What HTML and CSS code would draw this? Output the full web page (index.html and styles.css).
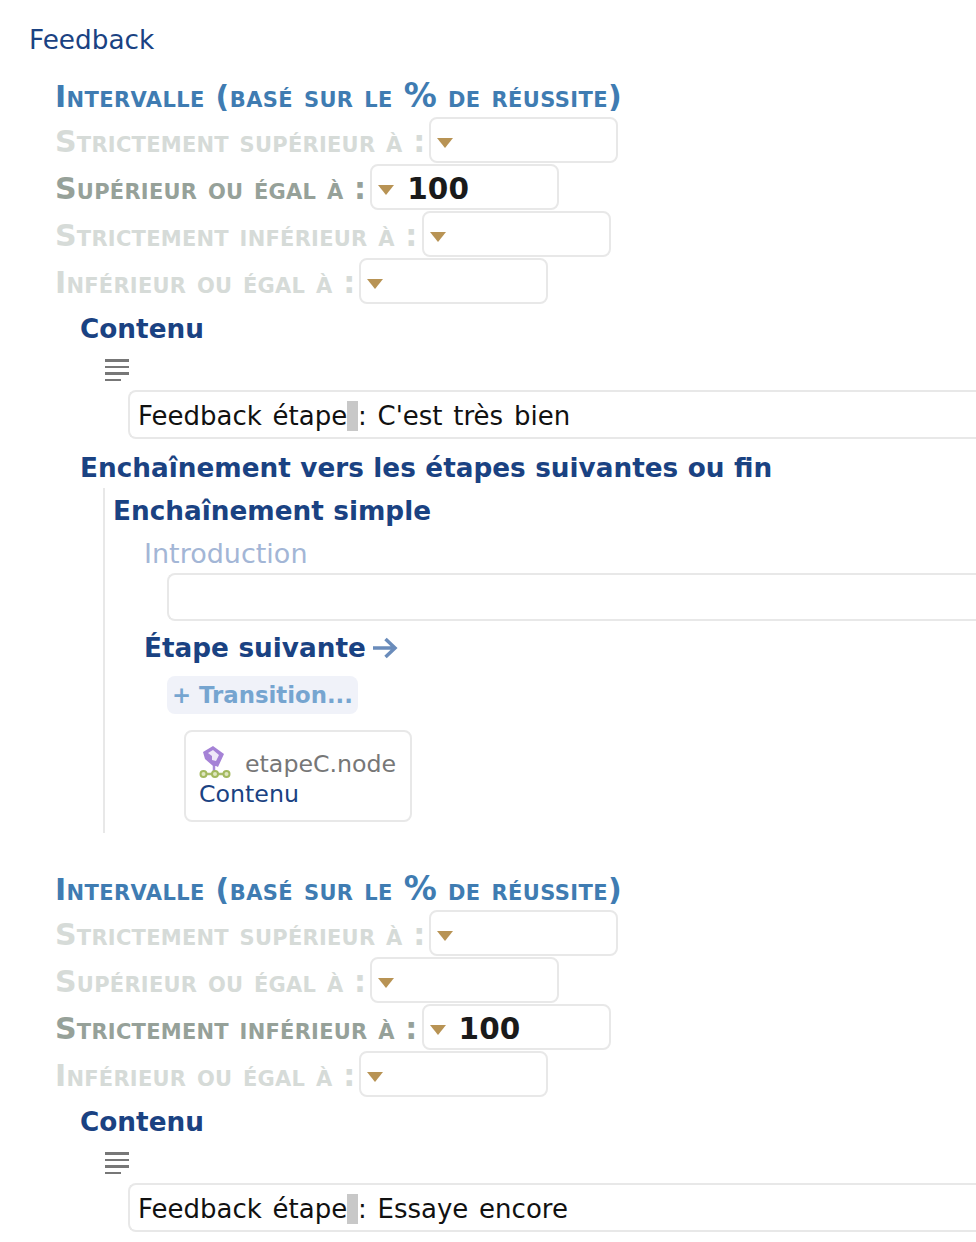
FILE: index.html
```html
<!DOCTYPE html>
<html lang="fr">
<head>
<meta charset="utf-8">
<title>Feedback</title>
<link rel="stylesheet" href="styles.css">
</head>
<body>
<div class="page">
  <div class="title">Feedback</div>
  <section class="range">
    <h2 class="range-title">Intervalle (basé sur le <span class="pct">%</span> de réussite)</h2>
    <div class="row off"><span class="lab">Strictement supérieur à :</span><span class="field"><i class="tri"></i></span></div>
    <div class="row on"><span class="lab">Supérieur ou égal à :</span><span class="field"><i class="tri"></i><b class="val">100</b></span></div>
    <div class="row off"><span class="lab">Strictement inférieur à :</span><span class="field"><i class="tri"></i></span></div>
    <div class="row off"><span class="lab">Inférieur ou égal à :</span><span class="field"><i class="tri"></i></span></div>
    <div class="inner">
      <h3 class="head">Contenu</h3>
      <div class="lines"><i></i><i></i><i></i><i class="short"></i></div>
      <div class="text-box">Feedback étape<span class="nbsp">&nbsp;</span>: C'est très bien</div>
      <h3 class="head next">Enchaînement vers les étapes suivantes ou fin</h3>
      <div class="chain">
        <h3 class="head">Enchaînement simple</h3>
        <div class="intro">Introduction</div>
        <div class="intro-box"></div>
        <h3 class="head step">Étape suivante
          <svg class="arrow" width="26" height="22" viewBox="0 0 26 22"><path d="M1 11H23M13.500 2l9.500 9-9.500 9" fill="none" stroke="#6a8cbb" stroke-width="3.500"/></svg>
        </h3>
        <div class="transition">+ Transition...</div>
        <div class="node">
          <div class="node-top">
            <svg class="node-icon" width="32" height="32" viewBox="0 0 32 32"><path d="M4 6l10-6 11 8-6 13-2-1-3 0-8-7z" fill="#a582d6"/><path d="M9 7l5-3 6 5-3 6-4-1 0-4z" fill="#efe8f8"/><path d="M15 20v5" stroke="#a88ad8" stroke-width="2.500"/><path d="M3 28h26" stroke="#a9bd6c" stroke-width="2.500"/><circle cx="4.500" cy="28" r="3" fill="#dfe6c0" stroke="#a3b95f" stroke-width="2"/><circle cx="16" cy="28" r="3" fill="#dfe6c0" stroke="#a3b95f" stroke-width="2"/><circle cx="27.500" cy="28" r="3" fill="#dfe6c0" stroke="#a3b95f" stroke-width="2"/></svg>
            <span class="node-name">etapeC.node</span>
          </div>
          <div class="node-label">Contenu</div>
        </div>
      </div>
    </div>
  </section>
  <section class="range second">
    <h2 class="range-title">Intervalle (basé sur le <span class="pct">%</span> de réussite)</h2>
    <div class="row off"><span class="lab">Strictement supérieur à :</span><span class="field"><i class="tri"></i></span></div>
    <div class="row off"><span class="lab">Supérieur ou égal à :</span><span class="field"><i class="tri"></i></span></div>
    <div class="row on"><span class="lab">Strictement inférieur à :</span><span class="field"><i class="tri"></i><b class="val">100</b></span></div>
    <div class="row off"><span class="lab">Inférieur ou égal à :</span><span class="field"><i class="tri"></i></span></div>
    <div class="inner">
      <h3 class="head">Contenu</h3>
      <div class="lines"><i></i><i></i><i></i><i class="short"></i></div>
      <div class="text-box">Feedback étape<span class="nbsp">&nbsp;</span>: Essaye encore</div>
    </div>
  </section>
</div>
</body>
</html>
```
FILE: styles.css
```css
html, body { margin: 0; padding: 0; background: #fff; }
body { width: 976px; height: 1242px; overflow: hidden; font-family: "DejaVu Sans", sans-serif; color: #1a4282; }
.page { box-sizing: border-box; width: 976px; height: 1242px; overflow: hidden; padding: 25px 0 0 28px; }
.title { font-size: 26.300px; line-height: 31px; margin-left: 1px; }
.range { margin: 23px 0 0 27px; }
.second { margin-top: 39px; }
h2, h3 { margin: 0; }
.range-title { font: bold 30px/36px "DejaVu Sans", sans-serif; font-variant: small-caps; letter-spacing: 0.400px; color: #3f7cb2; white-space: nowrap; }
.pct { font-size: 33px; line-height: 30px; }
.row { display: flex; align-items: flex-start; height: 47px; font: bold 30px/36px "DejaVu Sans", sans-serif; font-variant: small-caps; letter-spacing: 0.250px; white-space: nowrap; }
.range-title + .row { margin-top: 2px; }
.off .lab { color: #d6dbd8; }
.on .lab { color: #96a199; }
.lab { margin: 7px 4px 0 0; }
.field { box-sizing: border-box; width: 189px; height: 46px; border: 2px solid #e8e8e8; border-radius: 8px; display: flex; align-items: center; padding-left: 6px; font-variant: normal; letter-spacing: 0; }
.tri { width: 0; height: 0; margin-top: 6px; border-left: 8px solid transparent; border-right: 8px solid transparent; border-top: 10px solid #b89354; }
.val { font: bold 29.500px "DejaVu Sans", sans-serif; color: #1a1a1a; margin: 3px 0 0 13px; }
.inner { margin-left: 25px; }
.head { font-size: 26.300px; line-height: 32px; font-weight: bold; word-spacing: 0.300px; color: #1a4282; white-space: nowrap; }
.inner > .head:first-child { margin-top: 8px; }
.lines { display: flex; flex-direction: column; gap: 4px; width: 24px; margin: 14px 0 0 25px; }
.lines i { display: block; height: 2.500px; background: #777; }
.lines .short { width: 16px; }
.text-box { box-sizing: border-box; width: 848px; height: 49px; margin: 9px 0 0 48px; border: 2px solid #e8e8e8; border-right: 0; border-radius: 8px 0 0 8px; padding-left: 8px; font-size: 26px; word-spacing: 2.500px; line-height: 48px; color: #111; white-space: nowrap; }
.nbsp { background: #c8c8c8; }
.next { margin-top: 13px; }
.chain { margin: 4px 0 0 23px; border-left: 2px solid #e8e8e8; height: 338px; padding: 7px 0 0 8px; }
.intro { font-size: 27px; line-height: 32px; color: #a3b6d6; margin: 11px 0 0 31px; }
.intro-box { box-sizing: border-box; width: 810px; height: 48px; margin: 3px 0 0 54px; border: 2px solid #e8e8e8; border-right: 0; border-radius: 8px 0 0 8px; }
.step { display: flex; align-items: center; gap: 6px; margin: 11px 0 0 31px; }
.transition { display: inline-block; margin: 12px 0 0 54px; padding: 0 5px; height: 38px; line-height: 38px; border-radius: 8px; background: #f0f2f9; color: #76a5d0; font-weight: bold; font-size: 22.800px; white-space: nowrap; }
.node { box-sizing: border-box; width: 228px; height: 92px; margin: 16px 0 0 71px; border: 2px solid #e8e8e8; border-radius: 8px; padding: 15px 13px 0; }
.node-top { display: flex; align-items: center; gap: 14px; height: 34px; }
.node-icon { margin-bottom: 4px; }
.node-name { font-size: 23.700px; color: #777; }
.node-label { font-size: 23.700px; line-height: 26px; color: #1a4282; }
```
